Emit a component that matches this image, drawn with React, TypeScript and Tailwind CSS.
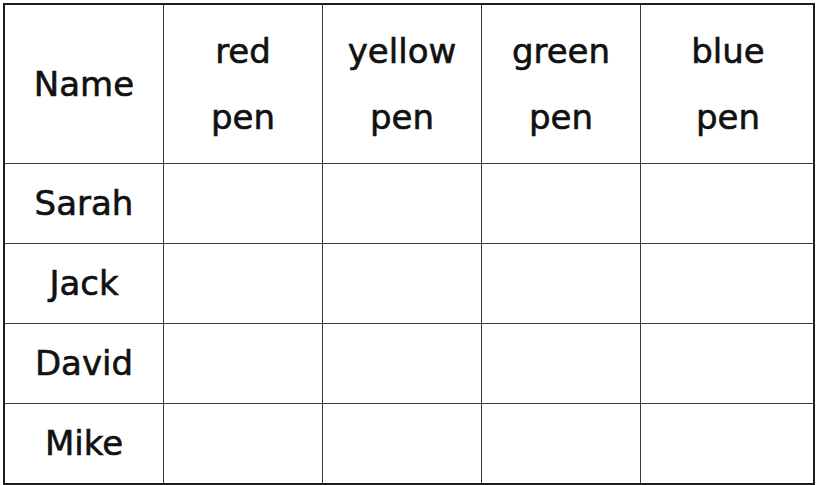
const pens = ['red', 'yellow', 'green', 'blue'];
const names = ['Sarah', 'Jack', 'David', 'Mike'];

export default function App() {
  return (
    <div className="w-[817px] h-[485px] bg-white pl-[3px] pt-[3px] font-['DejaVu_Sans',sans-serif] text-[#111] [-webkit-text-stroke:0.6px_#111]">
      <div className="grid grid-cols-[159px_159px_159px_159px_174px] grid-rows-[159px_80px_80px_80px_79px] w-[812px] border-2 border-[#1c1c1c]">
        <div className="flex items-center justify-center border-r border-b border-[#3a3a3a] text-[34px]">Name</div>
        {pens.map((p, i) => (
          <div
            key={p}
            className={`flex flex-col items-center justify-center border-b border-[#3a3a3a] text-[34px] leading-[66px] ${i < 3 ? 'border-r' : ''}`}
          >
            <span>{p}</span>
            <span>pen</span>
          </div>
        ))}
        {names.map((n, r) => (
          <Row key={n} name={n} last={r === names.length - 1} />
        ))}
      </div>
    </div>
  );
}

function Row({ name, last }: { name: string; last: boolean }) {
  return (
    <>
      <div className={`flex items-center justify-center border-r border-[#3a3a3a] text-[34px] ${last ? '' : 'border-b'}`}>
        {name}
      </div>
      {[0, 1, 2, 3].map((c) => (
        <div key={c} className={`border-[#3a3a3a] ${c < 3 ? 'border-r' : ''} ${last ? '' : 'border-b'}`} />
      ))}
    </>
  );
}
